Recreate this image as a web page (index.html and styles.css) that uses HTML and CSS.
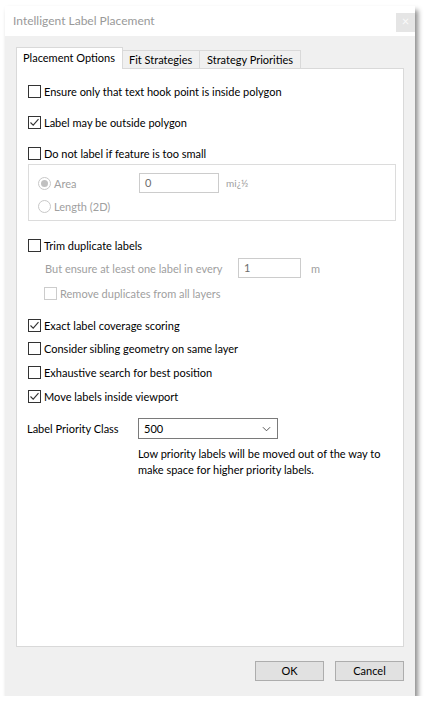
FILE: index.html
```html
<!DOCTYPE html>
<html>
<head>
<meta charset="utf-8">
<link rel="stylesheet" href="styles.css">
</head>
<body>
<div class="window">
  <div class="titlebar">
    <span class="title">Intelligent Label Placement</span>
    <span class="close">×</span>
  </div>
  <div class="body">
    <div class="tabs">
      <div class="tab active">Placement Options</div>
      <div class="tab t2">Fit Strategies</div>
      <div class="tab t3">Strategy Priorities</div>
    </div>
    <div class="panel">
      <div class="row r1"><span class="cb"></span><span>Ensure only that text hook point is inside polygon</span></div>
      <div class="row r2"><span class="cb"><svg viewBox="0 0 13 13"><polyline points="2.5,6.5 5.2,9.2 10.5,3.2"/></svg></span><span>Label may be outside polygon</span></div>
      <div class="row r2"><span class="cb"></span><span>Do not label if feature is too small</span></div>
      <div class="group">
        <div class="grow">
          <span class="radio on"></span><span class="dis glabel">Area</span>
          <span class="input">0</span><span class="unit">mi¿½</span>
        </div>
        <div class="grow g2">
          <span class="radio"></span><span class="dis glabel">Length (2D)</span>
        </div>
      </div>
      <div class="row r4"><span class="cb"></span><span>Trim duplicate labels</span></div>
      <div class="row r5 indent"><span class="dis etext">But ensure at least one label in every</span><span class="input w62">1</span><span class="dis munit">m</span></div>
      <div class="row r6 indent2"><span class="cb disabled"></span><span class="dis">Remove duplicates from all layers</span></div>
      <div class="row r7"><span class="cb"><svg viewBox="0 0 13 13"><polyline points="2.5,6.5 5.2,9.2 10.5,3.2"/></svg></span><span>Exact label coverage scoring</span></div>
      <div class="row r8"><span class="cb"></span><span>Consider sibling geometry on same layer</span></div>
      <div class="row r9"><span class="cb"></span><span>Exhaustive search for best position</span></div>
      <div class="row r9"><span class="cb"><svg viewBox="0 0 13 13"><polyline points="2.5,6.5 5.2,9.2 10.5,3.2"/></svg></span><span>Move labels inside viewport</span></div>
      <div class="row r10">
        <span class="plabel">Label Priority Class</span>
        <span class="select"><span>500</span><svg viewBox="0 0 10 6"><polyline points="1,1 5,5 9,1"/></svg></span>
      </div>
      <p class="desc">Low priority labels will be moved out of the way to make space for higher priority labels.</p>
    </div>
    <div class="footer">
      <span class="btn">OK</span>
      <span class="btn">Cancel</span>
    </div>
  </div>
</div>
</body>
</html>
```

FILE: styles.css
```css
html, body {
  margin: 0;
  padding: 0;
  background: #fff;
}
body {
  font-family: Lato, "Noto Sans", sans-serif;
  font-size: 11px;
  color: #000;
  white-space: nowrap;
}
.window {
  margin: 6px 0 0 5px;
  width: 410px;
  height: 690px;
  box-shadow: 3px 4px 5px rgba(0,0,0,0.45);
  display: flex;
  flex-direction: column;
}
.titlebar {
  height: 30px;
  background: #fff;
  display: flex;
  align-items: center;
  justify-content: space-between;
  padding: 0 0 0 8px;
}
.title {
  color: #999;
  font-size: 12px;
  margin-top: -2px;
}
.close {
  width: 19px;
  height: 19px;
  background: #e5e5e5;
  color: #fafafa;
  font-size: 13px;
  line-height: 17px;
  text-align: center;
  margin-top: 3px;
}
.body {
  flex: 1;
  background: #f0f0f0;
  padding: 11px 11px 0 11px;
  display: flex;
  flex-direction: column;
}
.tabs {
  display: flex;
  align-items: flex-end;
  height: 21px;
  position: relative;
  z-index: 1;
}
.tab {
  height: 18px;
  box-sizing: border-box;
  border: 1px solid #d9d9d9;
  border-bottom: none;
  border-left: none;
  background: #f0f0f0;
  padding: 0 0 0 6px;
  line-height: 17px;
  color: #000;
}
.tab.active {
  width: 107px;
  height: 22px;
  margin-bottom: -1px;
  background: #fff;
  border-left: 1px solid #d9d9d9;
  padding: 0 0 0 6px;
  line-height: 20px;
}
.t2 { width: 77px; }
.t3 { width: 101px; padding-left: 7px; }
.panel {
  height: 579px;
  box-sizing: border-box;
  background: #fff;
  border: 1px solid #d9d9d9;
  padding: 12px 7px 0 11px;
  display: flex;
  flex-direction: column;
}
.row {
  height: 20px;
  display: flex;
  align-items: center;
}
.r2 { margin-top: 11px; }
.r4 { margin-top: 14px; }
.r5 { margin-top: 3px; }
.r6 { margin-top: 5px; }
.r7 { margin-top: 12px; }
.r8 { margin-top: 3px; }
.r9 { margin-top: 4px; }
.r10 { margin-top: 12px; }
.cb {
  width: 13px;
  height: 13px;
  box-sizing: border-box;
  border: 1px solid #333;
  margin-right: 3px;
  flex: none;
  display: flex;
}
.cb svg {
  width: 13px;
  height: 13px;
  margin: -1px;
}
.cb polyline {
  fill: none;
  stroke: #333;
  stroke-width: 1.1;
}
.cb.disabled {
  border-color: #ccc;
}
.dis {
  color: #a0a0a0;
}
.group {
  margin-top: 1px;
  height: 57px;
  width: 368px;
  box-sizing: border-box;
  border: 1px solid #dcdcdc;
  padding: 8px 0 0 9px;
}
.grow {
  height: 20px;
  display: flex;
  align-items: center;
}
.g2 { margin-top: 3px; }
.radio {
  width: 13px;
  height: 13px;
  box-sizing: border-box;
  border: 1px solid #c8c8c8;
  border-radius: 50%;
  margin-right: 3px;
  flex: none;
  position: relative;
}
.radio.on::after {
  content: "";
  position: absolute;
  left: 2px;
  top: 2px;
  width: 7px;
  height: 7px;
  border-radius: 50%;
  background: #c0c0c0;
}
.glabel {
  width: 85px;
}
.input {
  width: 80px;
  height: 20px;
  box-sizing: border-box;
  border: 1px solid #cccccc;
  padding-left: 5px;
  line-height: 18px;
  color: #6d6d6d;
  flex: none;
}
.unit {
  margin-left: 7px;
  color: #a0a0a0;
  font-size: 10px;
}
.indent { padding-left: 17px; }
.indent2 { padding-left: 16px; }
.etext { width: 193px; flex: none; }
.w62 { width: 63px; }
.munit { margin-left: 10px; }
.plabel {
  width: 111px;
  flex: none;
  margin-left: -1px;
}
.select {
  width: 140px;
  height: 21px;
  box-sizing: border-box;
  border: 1px solid #7a7a7a;
  display: flex;
  align-items: center;
  justify-content: space-between;
  padding: 0 6px 0 5px;
  margin-top: 1px;
}
.select svg {
  width: 9px;
  height: 6px;
}
.select polyline {
  fill: none;
  stroke: #444;
  stroke-width: 1;
}
.desc {
  margin: 8px 0 0 110px;
  width: 245px;
  line-height: 16px;
  color: #000;
  white-space: normal;
}
.footer {
  display: flex;
  justify-content: flex-end;
  gap: 11px;
  margin-top: 14px;
}
.btn {
  width: 69px;
  height: 20px;
  box-sizing: border-box;
  border: 1px solid #adadad;
  background: #e1e1e1;
  text-align: center;
  line-height: 18px;
}
```
